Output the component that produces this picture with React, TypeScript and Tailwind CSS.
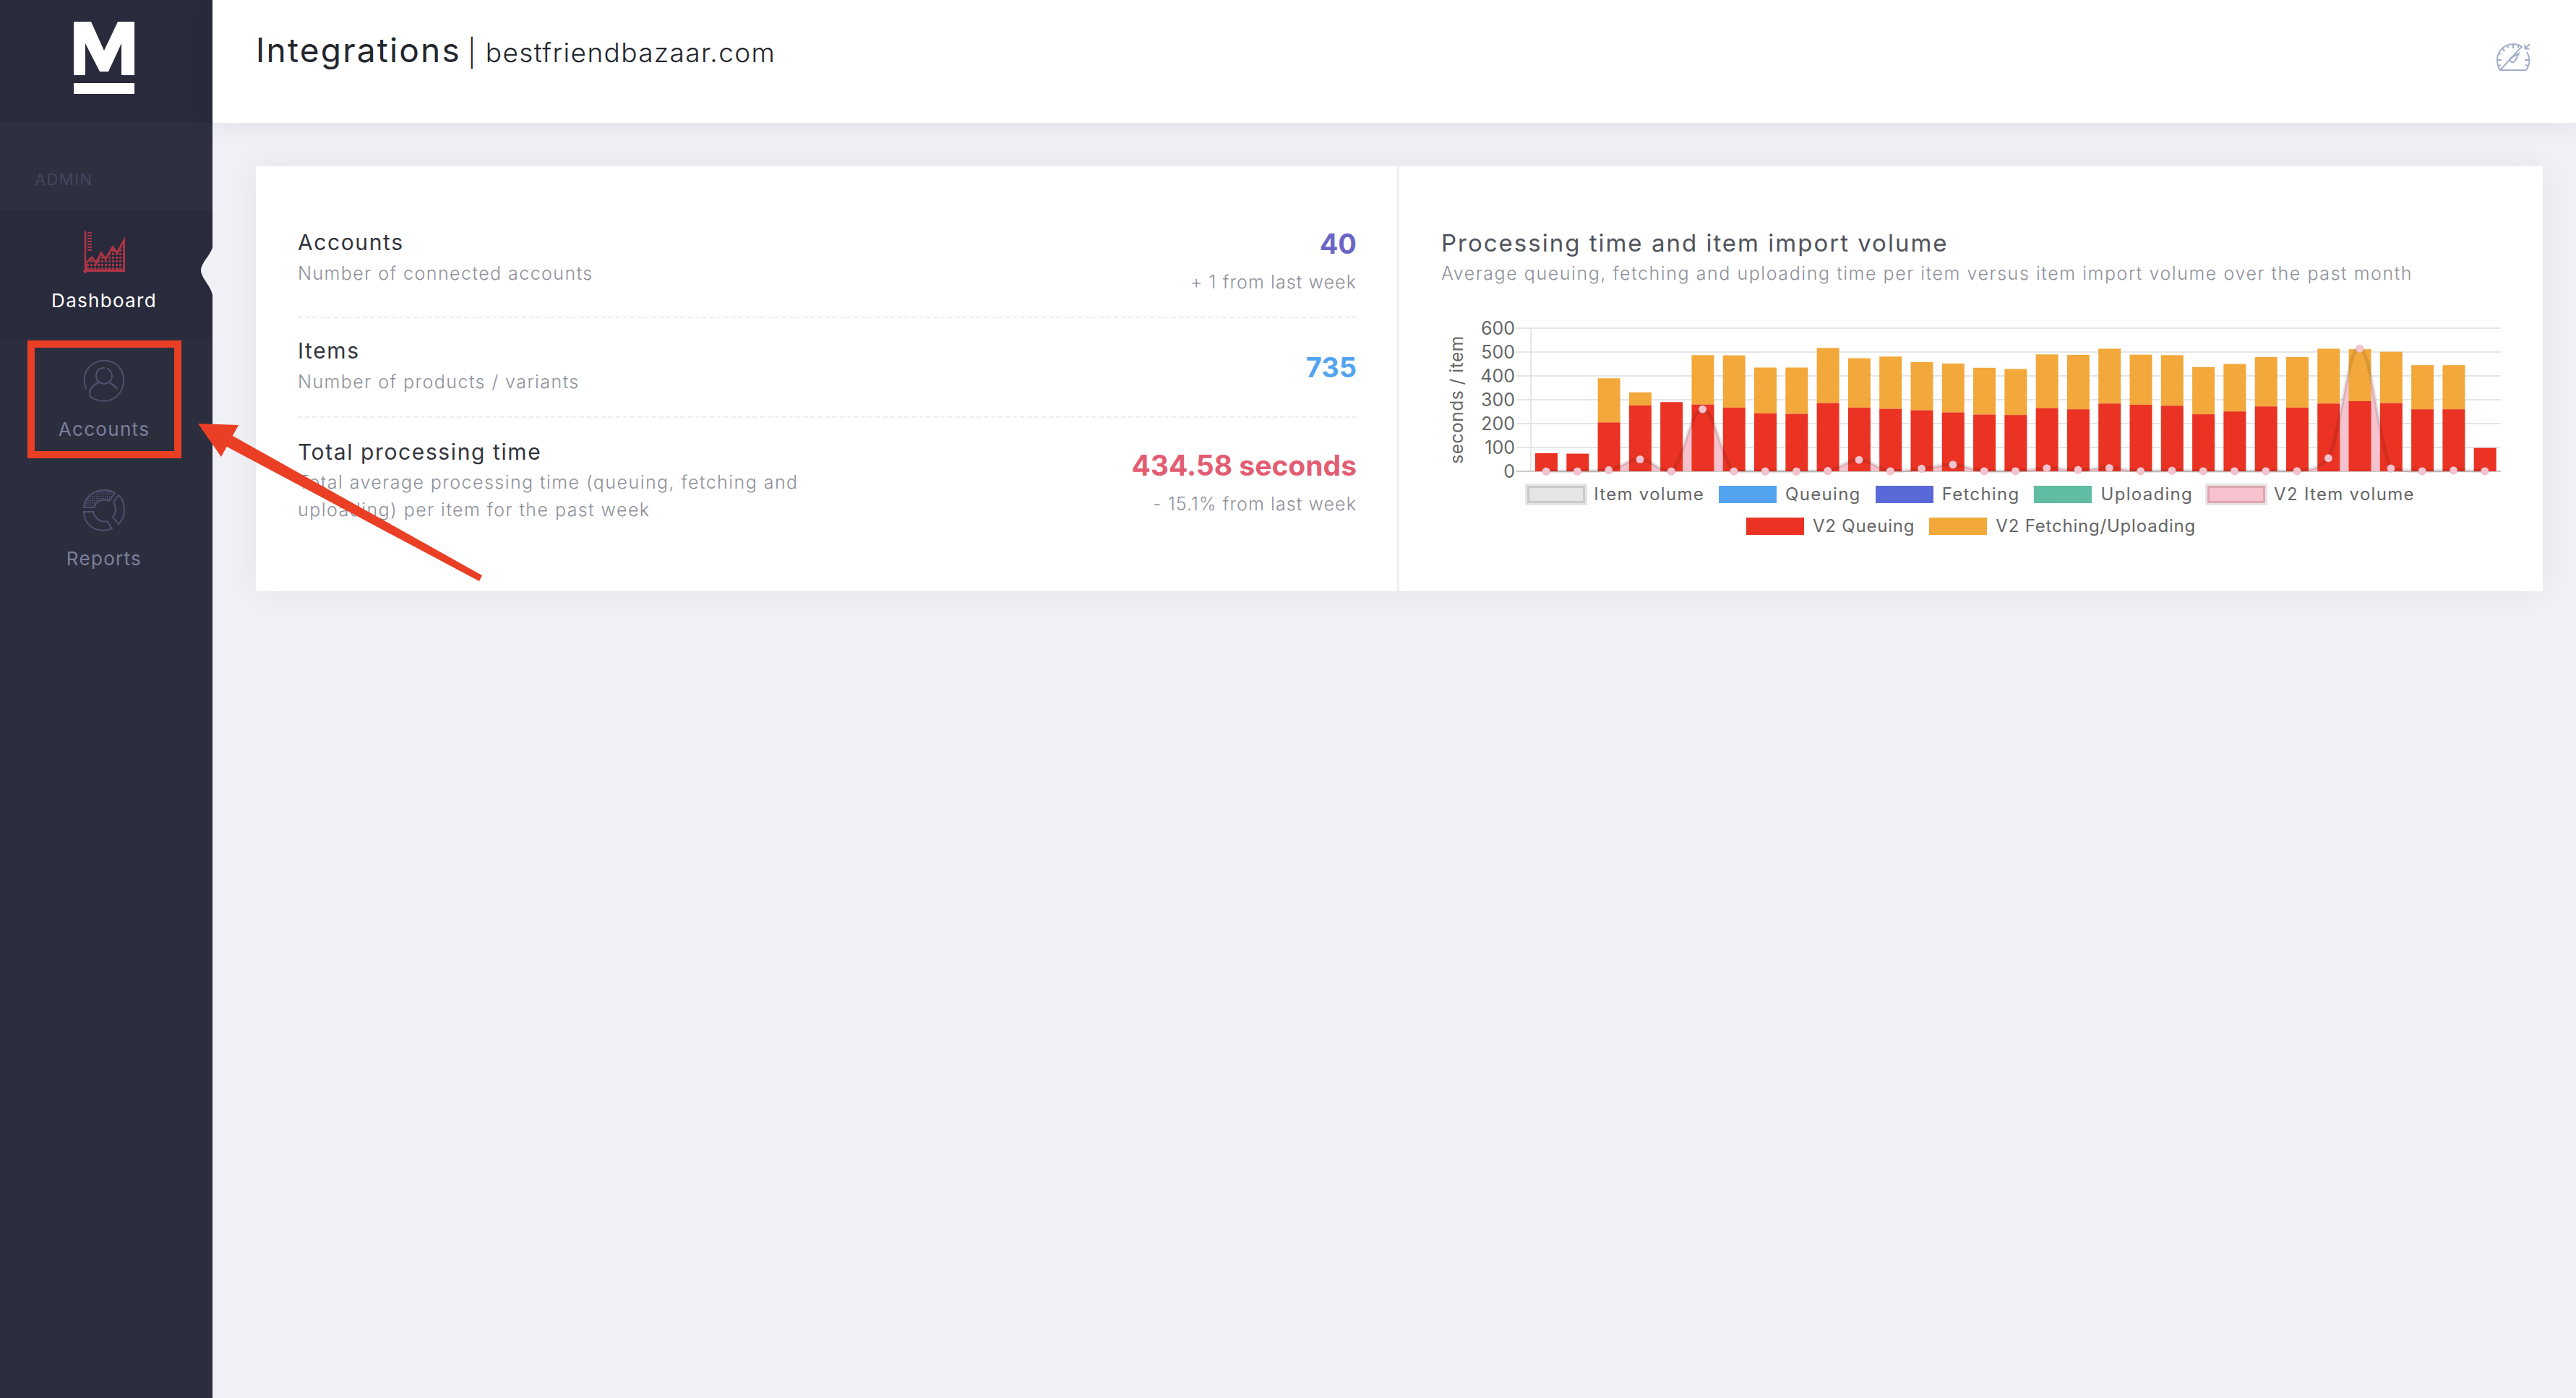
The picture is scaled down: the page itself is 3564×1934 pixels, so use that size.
import React from "react";

const queuing = [76, 74, 205, 276, 290, 280, 267, 243, 241, 286, 267, 262, 256, 247, 238, 236, 265, 260, 284, 279, 275, 239, 251, 272, 267, 284, 294, 286, 260, 260, 98];
const fetching = [76, 74, 390, 331, 290, 487, 486, 435, 435, 517, 474, 481, 458, 452, 434, 429, 490, 488, 514, 489, 487, 437, 450, 479, 479, 514, 512, 501, 445, 445, 98];
const volume = [0, 0, 5, 50, 0, 260, 0, 0, 0, 2, 48, 1, 11, 28, 1, 1, 13, 6, 14, 1, 3, 1, 1, 1, 1, 55, 514, 12, 1, 4, 1];

const plotLeft = 124;
const plotRight = 1466;
const plotTop = 14;
const plotBase = 212;
const band = (plotRight - plotLeft) / 31;
const yOf = (v: number) => plotBase - (v / 600) * (plotBase - plotTop);
const xOf = (i: number) => plotLeft + band * (i + 0.5) - 0.5;

// same kind of bezier smoothing a chart.js line gets
const smoothLine = (pts: number[][]) => {
  let d = `M${pts[0][0]} ${pts[0][1]}`;
  for (let i = 0; i < pts.length - 1; i++) {
    const p0 = pts[Math.max(i - 1, 0)];
    const p1 = pts[i];
    const p2 = pts[i + 1];
    const p3 = pts[Math.min(i + 2, pts.length - 1)];
    const t = 0.2;
    const c1y = Math.min(plotBase, p1[1] + (p2[1] - p0[1]) * t);
    const c2y = Math.min(plotBase, p2[1] - (p3[1] - p1[1]) * t);
    d += ` C${p1[0] + (p2[0] - p0[0]) * t} ${c1y} ${p2[0] - (p3[0] - p1[0]) * t} ${c2y} ${p2[0]} ${p2[1]}`;
  }
  return d;
};

const Logo = () => (
  <svg width="84" height="100" viewBox="0 0 84 100" fill="#fff">
    <polygon points="0,0 24,0 42,40 61,0 84,0 84,74 66,74 66,30 48,69 36,69 16,30 16,74 0,74" />
    <rect x="0" y="85" width="84" height="15" />
  </svg>
);

const DashboardIcon = () => (
  <svg width="58" height="58" viewBox="0 0 58 58" fill="none" stroke="#ad3546" strokeWidth="2.5">
    <defs>
      <pattern id="dots" width="5" height="5" patternUnits="userSpaceOnUse">
        <rect width="3" height="3" fill="#ad3546" stroke="none" />
      </pattern>
    </defs>
    <path d="M3 0V58M0 55H58" />
    <path d="M6 2H12M6 6H12M6 10H12M6 14H12M6 18H12M6 22H12M6 26H12" strokeWidth="2" />
    <path d="M4 44L12 36L18 44L25 30L31 38L41 22L47 30L57 12V54H4Z" fill="url(#dots)" strokeWidth="3" />
  </svg>
);

const AccountsIcon = () => (
  <svg width="58" height="58" viewBox="0 0 58 58" fill="none" stroke="#4e5270" strokeWidth="2">
    <path d="M4 40C-1 26 2 13 13 6C26-3 44 0 52 13C60 26 56 44 44 52C33 59 20 58 9 50" />
    <path d="M30 11C22 10 18 16 18 22C18 28 23 33 29 33C35 33 40 28 40 22C40 17 37 13 33 12" />
    <path d="M22 31C15 33 9 40 9 46C9 48 9 49 10 50M36 31C40 33 44 36 47 40" />
  </svg>
);

const ReportsIcon = () => (
  <svg width="58" height="58" viewBox="0 0 58 58" fill="none" stroke="#4e5270" strokeWidth="2">
    <defs>
      <pattern id="grain" width="3" height="3" patternUnits="userSpaceOnUse">
        <rect width="1.6" height="1.6" fill="#4e5270" stroke="none" />
      </pattern>
    </defs>
    <path d="M1 25C2 11 14 1 29 1C34 1 39 2 44 5L36 16C28 12 18 16 15 25Z" fill="url(#grain)" />
    <path d="M49 8C55 13 57 21 57 29C57 37 54 43 49 48L41 38C46 32 46 24 42 18Z" />
    <path d="M1 31H14C16 40 24 46 33 44L37 50C38 52 39 53 40 54C30 59 17 57 9 50C4 45 1 38 1 31Z" />
  </svg>
);

const GaugeIcon = () => (
  <svg width="48" height="40" viewBox="0 0 48 40" fill="none" stroke="#a3aeca" strokeWidth="2">
    <path d="M5 37H41C44 33 45.5 28 45.5 23C45.5 19 44.5 16 42 12M35 4.5C31 2 27 1 23 1C11 1 1 11 1 23C1 28 2.5 33 5 37Z" />
    <path d="M23 1V7M1 23H7M39 23H45M8 7L11.5 11M15 3L16.5 6M31 3L29.5 6M3 13L6.5 15M2.5 31L6 30M43.5 31L40 30" />
    <path d="M31 14L20 20C18 22 19 26 22 26C25 27 26 24 27 22Z" />
    <path d="M46 1L40 7M39.5 1.5V7.5H45.5" />
  </svg>
);

const NavItem = ({ icon, label, active, className }: { icon: React.ReactNode; label: string; active?: boolean; className?: string }) => (
  <div className={`relative flex flex-col items-center pt-[30px] pr-[6px] ${active ? "bg-[#292a3b]" : ""} ${className ?? "h-[178px]"}`}>
    {icon}
    <span className={`mt-[22px] text-[26px] leading-[32px] font-normal tracking-[1.3px] ${active ? "text-white" : "text-[#7b7f9c]"}`}>{label}</span>
    {active && (
      <svg className="absolute top-[52px] right-0" width="16" height="66" viewBox="0 0 16 66" fill="#f0f1f6">
        <path d="M16 0C14 10 0 22 0 32C0 42 14 54 16 66Z" />
      </svg>
    )}
  </div>
);

const LegendItem = ({ box, label, tight }: { box: string; label: string; tight?: boolean }) => (
  <div className="flex items-center gap-[12px]">
    <span className={`h-[24px] w-[80px] ${box}`} />
    <span className={`text-[24px] leading-[30px] text-[#666] ${tight ? "tracking-[0.8px]" : "tracking-[1.3px]"}`}>{label}</span>
  </div>
);

const Chart = () => {
  const pts = volume.map((v, i) => [xOf(i), yOf(v)]);
  const line = smoothLine(pts);
  const area = `${line} L${pts[30][0]} ${plotBase} L${pts[0][0]} ${plotBase}Z`;
  return (
    <svg width="1466" height="232" viewBox="0 0 1466 232" className="block" style={{ fontFamily: "Inter, sans-serif" }}>
      {[0, 100, 200, 300, 400, 500, 600].map((t) => (
        <g key={t}>
          <line x1="104" x2={plotRight} y1={yOf(t)} y2={yOf(t)} stroke={t === 0 ? "#c9c9c9" : "#e5e5e5"} strokeWidth="2" />
          <text x="102" y={yOf(t) + 9} textAnchor="end" fontSize="25" fill="#666">{t}</text>
        </g>
      ))}
      <line x1={plotLeft} x2={plotLeft} y1={plotTop} y2={plotBase} stroke="#e5e5e5" strokeWidth="2" />
      <text transform="rotate(-90 30 113)" x="30" y="113" textAnchor="middle" fontSize="24.5" letterSpacing="0.5" fill="#666">seconds / item</text>
      <path d={area} fill="#f5c2cd" />
      {queuing.map((q, i) => {
        const x = plotLeft + band * i + 6;
        return (
          <g key={i}>
            {fetching[i] > q && (
              <rect x={x} y={yOf(fetching[i])} width="31" height={yOf(q) - yOf(fetching[i])} fill="#f2a83b" />
            )}
            <rect x={x} y={yOf(q)} width="31" height={plotBase - yOf(q)} fill="#ea3323" />
          </g>
        );
      })}
      <path d={line} fill="none" stroke="rgba(0,0,0,0.1)" strokeWidth="5" />
      {pts.map((p, i) => (
        <circle key={i} cx={p[0]} cy={p[1]} r="5.5" fill="#f5c2cd" stroke="rgba(0,0,0,0.08)" strokeWidth="1" />
      ))}
    </svg>
  );
};

export default function App() {
  return (
    <div className="relative flex h-[1934px] w-[3564px] overflow-hidden bg-[#f0f1f6] font-['Inter',sans-serif]">
      {/* Sidebar */}
      <aside className="flex w-[294px] shrink-0 flex-col bg-[#2c2e3e]">
        <div className="flex h-[170px] justify-center bg-[#292a3b] pt-[30px] pr-[6px]">
          <Logo />
        </div>
        <div className="flex h-[120px] items-end bg-[#2e303f] pb-[31px] pl-[48px] text-[22px] leading-[22px] tracking-[1.4px] text-[#43465f]">ADMIN</div>
        <NavItem icon={<DashboardIcon />} label="Dashboard" active />
        <NavItem icon={<AccountsIcon />} label="Accounts" className="h-[179px]" />
        <NavItem icon={<ReportsIcon />} label="Reports" />
      </aside>

      {/* Main */}
      <main className="flex min-w-0 flex-1 flex-col">
        <header className="z-10 flex h-[170px] items-start justify-between bg-white pt-[36px] pr-[62px] pl-[60px] shadow-[0_4px_30px_rgba(40,45,80,0.08)]">
          <div className="flex items-baseline text-[#23262d]">
            <span className="text-[46px] leading-[66px] font-normal tracking-[2.2px]">Integrations</span>
            <span className="ml-[9px] text-[37px] leading-[66px] font-light tracking-[1.4px]">| bestfriendbazaar.com</span>
          </div>
          <div className="pt-[24px]">
            <GaugeIcon />
          </div>
        </header>

        <div className="pt-[60px] pr-[46px] pl-[60px]">
          <section className="flex h-[588px] bg-white shadow-[0_0_40px_rgba(40,45,80,0.06)]">
            {/* Stats */}
            <div className="flex w-[1582px] shrink-0 flex-col border-r-[3px] border-[#eceef4] pt-[85px] pr-[56px] pl-[58px]">
              <div className="flex h-[125px] justify-between border-b-2 border-dashed border-[#eceef4]">
                <div>
                  <div className="text-[30px] leading-[40px] tracking-[1.6px] text-[#33353d]">Accounts</div>
                  <div className="mt-[5px] text-[25px] leading-[36px] font-light tracking-[1.45px] text-[#8f919b]">Number of connected accounts</div>
                </div>
                <div className="text-right">
                  <div className="text-[38px] leading-[44px] font-bold text-[#6b66c6]">40</div>
                  <div className="mt-[13px] text-[25px] leading-[36px] font-light tracking-[1.1px] text-[#8f919b]">+ 1 from last week</div>
                </div>
              </div>
              <div className="flex h-[138px] items-start justify-between border-b-2 border-dashed border-[#eceef4] pt-[25px]">
                <div>
                  <div className="text-[30px] leading-[40px] tracking-[1.6px] text-[#33353d]">Items</div>
                  <div className="mt-[5px] text-[25px] leading-[36px] font-light tracking-[1.45px] text-[#8f919b]">Number of products / variants</div>
                </div>
                <div className="pt-[21px] text-[38px] leading-[44px] font-bold text-[#52a3f0]">735</div>
              </div>
              <div className="flex items-start justify-between pt-[27px]">
                <div className="w-[740px]">
                  <div className="text-[30px] leading-[40px] tracking-[1.6px] text-[#33353d]">Total processing time</div>
                  <div className="mt-[3px] text-[25px] leading-[38px] font-light tracking-[1.45px] text-[#8f919b]">Total average processing time (queuing, fetching and uploading) per item for the past week</div>
                </div>
                <div className="pt-[17px] text-right">
                  <div className="text-[39px] leading-[44px] font-bold text-[#e35d72]">434.58 seconds</div>
                  <div className="mt-[13px] text-[25px] leading-[36px] font-light tracking-[1.1px] text-[#8f919b]">- 15.1% from last week</div>
                </div>
              </div>
            </div>

            {/* Chart */}
            <div className="flex min-w-0 flex-1 flex-col px-[58px] pt-[86px]">
              <div className="text-[33px] leading-[40px] tracking-[2px] text-[#50535b]">Processing time and item import volume</div>
              <div className="mt-[4px] text-[25px] leading-[36px] font-light tracking-[1.56px] text-[#8f919b]">Average queuing, fetching and uploading time per item versus item import volume over the past month</div>
              <div className="mt-[44px]">
                <Chart />
              </div>
              <div className="-mt-[3px] flex flex-col items-center gap-[14px]">
                <div className="flex gap-[20px]">
                  <LegendItem box="border-[3px] border-[#c9c9c9] bg-[#e5e5e5] outline-[3px] outline-[#e5e5e5]" label="Item volume" />
                  <LegendItem box="bg-[#52a3f0]" label="Queuing" />
                  <LegendItem box="bg-[#5a69d8]" label="Fetching" />
                  <LegendItem box="bg-[#60bca3]" label="Uploading" />
                  <LegendItem box="border-[3px] border-[#e0a5b2] bg-[#f5c2cd] outline-[3px] outline-[#e5e5e5]" label="V2 Item volume" />
                </div>
                <div className="flex gap-[20px]">
                  <LegendItem box="bg-[#ea3323]" label="V2 Queuing" tight />
                  <LegendItem box="bg-[#f2a83b]" label="V2 Fetching/Uploading" tight />
                </div>
              </div>
            </div>
          </section>
        </div>
      </main>

      {/* Annotation drawn over the screenshot */}
      <div className="absolute top-[471px] left-[38px] h-[163px] w-[213px] border-[10px] border-[#ea3f24]" />
      <svg className="absolute inset-0" width="3564" height="1934" fill="#ea3f24">
        <polygon points="274,586 330,588 306,632" />
        <polygon points="322,603 667,796 663,804 312,617" />
      </svg>
    </div>
  );
}
